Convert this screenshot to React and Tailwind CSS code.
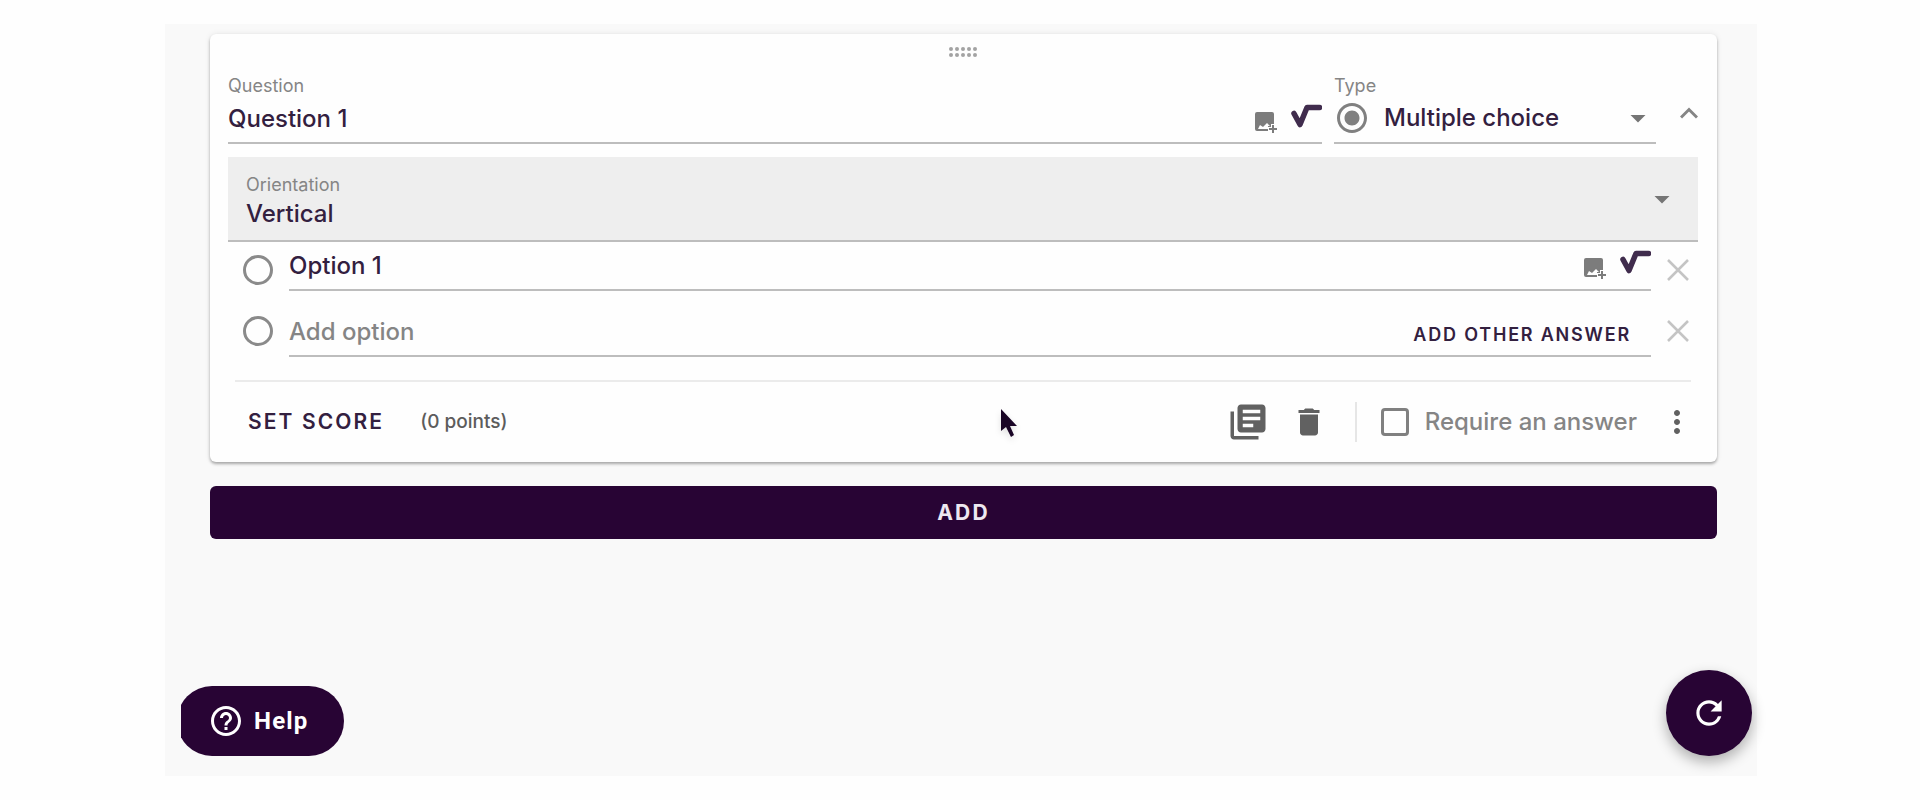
import { useState } from "react";
import {
  MdArrowDropDown,
  MdDelete,
  MdHelpOutline,
  MdLibraryBooks,
  MdMoreVert,
  MdRadioButtonChecked,
  MdRefresh,
} from "react-icons/md";

function ImagePlusIcon() {
  return (
    <svg viewBox="0 0 22 22" className="w-[22px] h-[22px]" fill="currentColor">
      <path d="M2 0h15a2 2 0 0 1 2 2v10h-3v3h-3v4H2a2 2 0 0 1-2-2V2a2 2 0 0 1 2-2zM3 17h10v-3h2l-3-3-4 4-3-2z" fillRule="evenodd" />
      <path d="M17 13h2v3h3v2h-3v3h-2v-3h-3v-2h3z" />
    </svg>
  );
}

function FormulaIcon() {
  return (
    <svg viewBox="0 0 31 25" className="w-[31px] h-[25px]" fill="none" stroke="currentColor">
      <path
        d="M3 9.500 L9 20.500 L16 3.500 H28.500"
        strokeWidth="5.5"
        strokeLinejoin="round"
        strokeLinecap="round"
      />
    </svg>
  );
}

function CloseIcon() {
  return (
    <svg viewBox="0 0 22 22" className="w-[22px] h-[22px]" fill="none" stroke="currentColor">
      <path d="M1 1 L21 21 M21 1 L1 21" strokeWidth="2.5" />
    </svg>
  );
}

function DragHandle() {
  const dots = [2, 8, 14, 20, 26];
  return (
    <svg viewBox="0 0 28 10" className="w-7 h-[10px] text-[#a3a3a3]" fill="currentColor">
      {dots.map((x) => (
        <g key={x}>
          <circle cx={x} cy="2" r="2" />
          <circle cx={x} cy="8" r="2" />
        </g>
      ))}
    </svg>
  );
}

function FieldTools() {
  return (
    <div className="flex items-start gap-[14px]">
      <button aria-label="Add image" className="text-[#7c7c7c] pt-2">
        <ImagePlusIcon />
      </button>
      <button aria-label="Add formula" className="text-[#402c4d]">
        <FormulaIcon />
      </button>
    </div>
  );
}

export default function App() {
  const [question, setQuestion] = useState("Question 1");
  const [option, setOption] = useState("Option 1");
  const [required, setRequired] = useState(false);

  return (
    <div className="min-h-screen bg-[#fefefe] py-6 pl-[165px] pr-[163px] flex flex-col font-['Inter',sans-serif] text-[#33203f]">
      <main className="flex-1 flex flex-col bg-[#f9f9f9] pt-[10px]">
        <section className="relative ml-[45px] mr-10 pl-[18px] pr-[19px] pt-[13px] bg-[#fefefe] rounded-md shadow-[0_2px_3px_rgba(0,0,0,0.3),0_0_6px_rgba(0,0,0,0.08)]">
          <div className="flex justify-center">
            <DragHandle />
          </div>

          <div className="flex items-start mt-[17px]">
            <div className="flex-1 mr-3 border-b-2 border-[#bdbdbd]">
              <label htmlFor="question" className="block h-6 text-lg leading-6 text-[#858585]">
                Question
              </label>
              <div className="flex h-11">
                <input
                  id="question"
                  value={question}
                  onChange={(e) => setQuestion(e.target.value)}
                  className="flex-1 min-w-0 pb-[3px] text-2xl font-medium outline-none"
                />
                <div className="pt-[6px]">
                  <FieldTools />
                </div>
              </div>
            </div>

            <div className="w-[322px] border-b-2 border-[#bdbdbd]">
              <label htmlFor="type" className="block h-6 text-lg leading-6 text-[#858585]">
                Type
              </label>
              <div className="flex items-center h-11 pb-1">
                <MdRadioButtonChecked className="size-9 text-[#808080]" />
                <select id="type" className="flex-1 min-w-0 ml-[14px] text-2xl font-medium appearance-none outline-none">
                  <option>Multiple choice</option>
                </select>
                <MdArrowDropDown className="size-9 text-[#757575]" />
              </div>
            </div>

            <button aria-label="Collapse" className="w-[42px] h-[78px] flex items-center justify-end text-[#858585]">
              <svg viewBox="0 0 18 12" className="w-[18px] h-3" fill="none" stroke="currentColor">
                <path d="M1 10.500 L9 2.500 L17 10.500" strokeWidth="3" />
              </svg>
            </button>
          </div>

          <div className="relative mt-[5px] pt-4 bg-[#eeeeee] border-b-2 border-[#bdbdbd]">
            <label htmlFor="orientation" className="block h-6 px-[18px] text-lg leading-6 text-[#858585]">
              Orientation
            </label>
            <select
              id="orientation"
              className="block w-full h-[43px] pb-[10px] px-[18px] text-2xl font-medium appearance-none outline-none"
            >
              <option>Vertical</option>
            </select>
            <MdArrowDropDown className="absolute right-[18px] top-6 size-9 text-[#757575] pointer-events-none" />
          </div>

          <div className="flex items-end">
            <input
              type="radio"
              name="answer"
              aria-label="Option 1"
              className="appearance-none size-[30px] ml-[15px] mb-[6px] rounded-full border-3 border-[#8a8a8a]"
            />
            <div className="flex flex-1 h-[49px] ml-4 border-b-2 border-[#bdbdbd]">
              <input
                aria-label="Option text"
                value={option}
                onChange={(e) => setOption(e.target.value)}
                className="flex-1 min-w-0 text-2xl font-medium outline-none"
              />
              <div className="pt-2">
                <FieldTools />
              </div>
            </div>
            <button aria-label="Remove option" className="ml-4 mr-[9px] mb-[10px] text-[#c4c4c4]">
              <CloseIcon />
            </button>
          </div>

          <div className="flex items-end pt-5">
            <input
              type="radio"
              name="answer"
              aria-label="New option"
              className="appearance-none size-[30px] ml-[15px] mb-[11px] rounded-full border-3 border-[#8a8a8a]"
            />
            <div className="flex flex-1 h-[46px] ml-4 border-b-2 border-[#bdbdbd]">
              <input
                aria-label="Add option"
                placeholder="Add option"
                className="flex-1 min-w-0 pb-[3px] text-2xl font-medium outline-none placeholder:text-[#858585]"
              />
              <button className="pt-1 pr-5 text-lg font-semibold tracking-widest">ADD OTHER ANSWER</button>
            </div>
            <button aria-label="Remove new option" className="ml-4 mr-[9px] mb-[15px] text-[#c4c4c4]">
              <CloseIcon />
            </button>
          </div>

          <hr className="mt-[23px] mx-[7px] border-t-2 border-[#ebebeb]" />

          <div className="flex items-center h-20 pl-5">
            <button className="text-[21px] font-semibold tracking-widest">SET SCORE</button>
            <span className="ml-9 text-[19px] font-medium text-[#5c5c5c]">(0 points)</span>
            <div className="flex items-center ml-auto text-[#616161]">
              <button aria-label="Duplicate">
                <MdLibraryBooks className="size-[42px]" />
              </button>
              <button aria-label="Delete" className="ml-[22px]">
                <MdDelete className="size-9" />
              </button>
              <div className="w-[2px] h-10 ml-7 bg-[#e6e6e6]" />
              <input
                id="required"
                type="checkbox"
                checked={required}
                onChange={(e) => setRequired(e.target.checked)}
                className="appearance-none size-7 ml-6 rounded-sm border-3 border-[#808080] checked:bg-[#808080]"
              />
              <label htmlFor="required" className="ml-4 text-2xl font-medium text-[#858585]">
                Require an answer
              </label>
              <button aria-label="More" className="ml-[22px] mr-[3px]">
                <MdMoreVert className="size-9" />
              </button>
            </div>
          </div>

          {/* mouse pointer */}
          <svg viewBox="0 0 18 28" className="absolute left-[790px] top-[375px] w-[18px] h-7 drop-shadow-md" fill="#1a0526">
            <path d="M1 0 V22 L6 18 L11 28 L14 26 L10 17 H17 Z" />
          </svg>
        </section>

        <button className="h-[53px] mt-6 ml-[45px] mr-10 rounded-md bg-[#280434] text-[21px] font-bold tracking-widest text-[#eee8f0]">
          ADD
        </button>

        <div className="flex items-end justify-between mt-auto pt-6 pl-4 pr-[5px] pb-5">
          <div className="overflow-hidden">
            <button className="flex items-center gap-[10px] h-[70px] -ml-1 pl-[31px] pr-[35px] rounded-full bg-[#280434] text-white font-['Roboto',sans-serif] text-2xl font-bold tracking-wider">
              <MdHelpOutline className="size-9" />
              Help
            </button>
          </div>
          <button
            aria-label="Refresh"
            className="flex items-center justify-center size-[86px] rounded-full bg-[#280434] text-white shadow-[0_6px_14px_rgba(0,0,0,0.3)]"
          >
            <MdRefresh className="size-[38px]" />
          </button>
        </div>
      </main>
    </div>
  );
}
